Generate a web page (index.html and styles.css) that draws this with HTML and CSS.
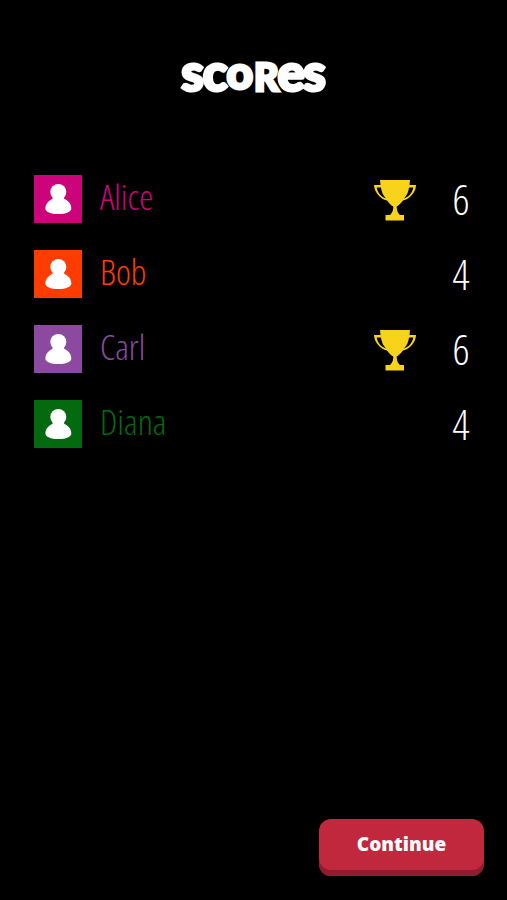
FILE: index.html
```html
<!DOCTYPE html>
<html lang="en">
<head>
<meta charset="utf-8">
<title>Scores</title>
<link rel="stylesheet" href="styles.css">
</head>
<body>
<svg class="defs" aria-hidden="true">
  <symbol id="person" viewBox="0 0 48 48">
    <circle cx="24.300" cy="17" r="8" fill="#fff"/>
    <path d="M19 21H29.500C29.500 22.500 29.500 23.300 31 24.200C35 26 37.300 29.500 37.300 33.500C37.300 37 32 39 24.300 39C16.800 39 11.400 37 11.400 33.500C11.400 29.500 14 26 17.800 24.200C19.300 23.300 19 22.500 19 21Z" fill="#fff"/>
  </symbol>
  <symbol id="cup" viewBox="0 0 42 41">
    <path d="M6 0H36L35.500 5H42C42 12 36 19 29 20.500C26.500 24 24 25.500 22.700 26.500C22.700 31 24 33 26 35H30V40.500H11.500V35H16C18 33 19.300 31 19.300 26.500C17.500 25.500 15.500 24 13 20.500C6 19 .2 12 0 5H6.500ZM2.700 7.500C3.500 12.500 7 17 12 18.500C9 15.500 7.500 11.500 7 7.500ZM39.300 7.500H35C34.500 11.500 33 15.500 30 18.500C35 17 38.500 12.500 39.300 7.500Z" fill="#f9d319" fill-rule="evenodd"/>
  </symbol>
</svg>
<main class="screen">
  <h1 class="title"><span>s</span><span>c</span><span class="o">o</span><span class="cap">R</span><span class="e">e</span><span>s</span></h1>
  <ul class="players">
    <li class="player alice"><svg class="avatar"><use href="#person"/></svg><span class="name">Alice</span><svg class="trophy"><use href="#cup"/></svg><span class="score">6</span></li>
    <li class="player bob"><svg class="avatar"><use href="#person"/></svg><span class="name">Bob</span><span class="score">4</span></li>
    <li class="player carl"><svg class="avatar"><use href="#person"/></svg><span class="name">Carl</span><svg class="trophy"><use href="#cup"/></svg><span class="score">6</span></li>
    <li class="player diana"><svg class="avatar"><use href="#person"/></svg><span class="name">Diana</span><span class="score">4</span></li>
  </ul>
  <button class="continue">Continue</button>
</main>
</body>
</html>
```
FILE: styles.css
```css
* { box-sizing: border-box; }
body { margin: 0; background: #000; color: #fff; font-family: "Open Sans", sans-serif; }
.defs { display: none; }
.screen { height: 900px; padding: 48px 23px 24px 34px; display: flex; flex-direction: column; }
.title {
  margin: 0 11px 0 0;
  height: 48px;
  display: flex;
  justify-content: center;
  align-items: baseline;
  font: 900 51px/48px Lato, sans-serif;
  -webkit-text-stroke: 3px #fff;
}
.title span { width: 22.500px; display: flex; justify-content: center; }
.title .o { width: 27px; font-size: 46px; transform: translateY(-2px); }
.title .cap { width: 26px; font-size: 38px; }
.title .e { width: 24px; }
.players { list-style: none; margin: 79px 0 0; padding: 0; display: grid; gap: 27px; }
.player { height: 48px; display: flex; font-stretch: 75%; font-weight: 300; }
.avatar { width: 48px; height: 48px; background: var(--color); }
.name { flex: 1; margin-left: 18px; font-size: 35.500px; line-height: 43px; color: var(--color); }
.trophy { width: 42px; height: 41px; margin: 5px 27px 0 0; }
.score { width: 36px; margin-right: 5px; text-align: center; font-size: 42px; line-height: 48px; }
.alice { --color: #cc047c; }
.bob { --color: #ff3c00; }
.carl { --color: #8b4a9f; }
.diana { --color: #046a10; }
.continue {
  width: 165px;
  height: 57px;
  margin: auto 0 0 auto;
  padding: 0 0 7px;
  border: 0;
  border-radius: 12px;
  background: #c1273d;
  box-shadow: inset 0 -6px #8e1d2f;
  color: #fff;
  font: 800 19px "Open Sans", sans-serif;
}
```
